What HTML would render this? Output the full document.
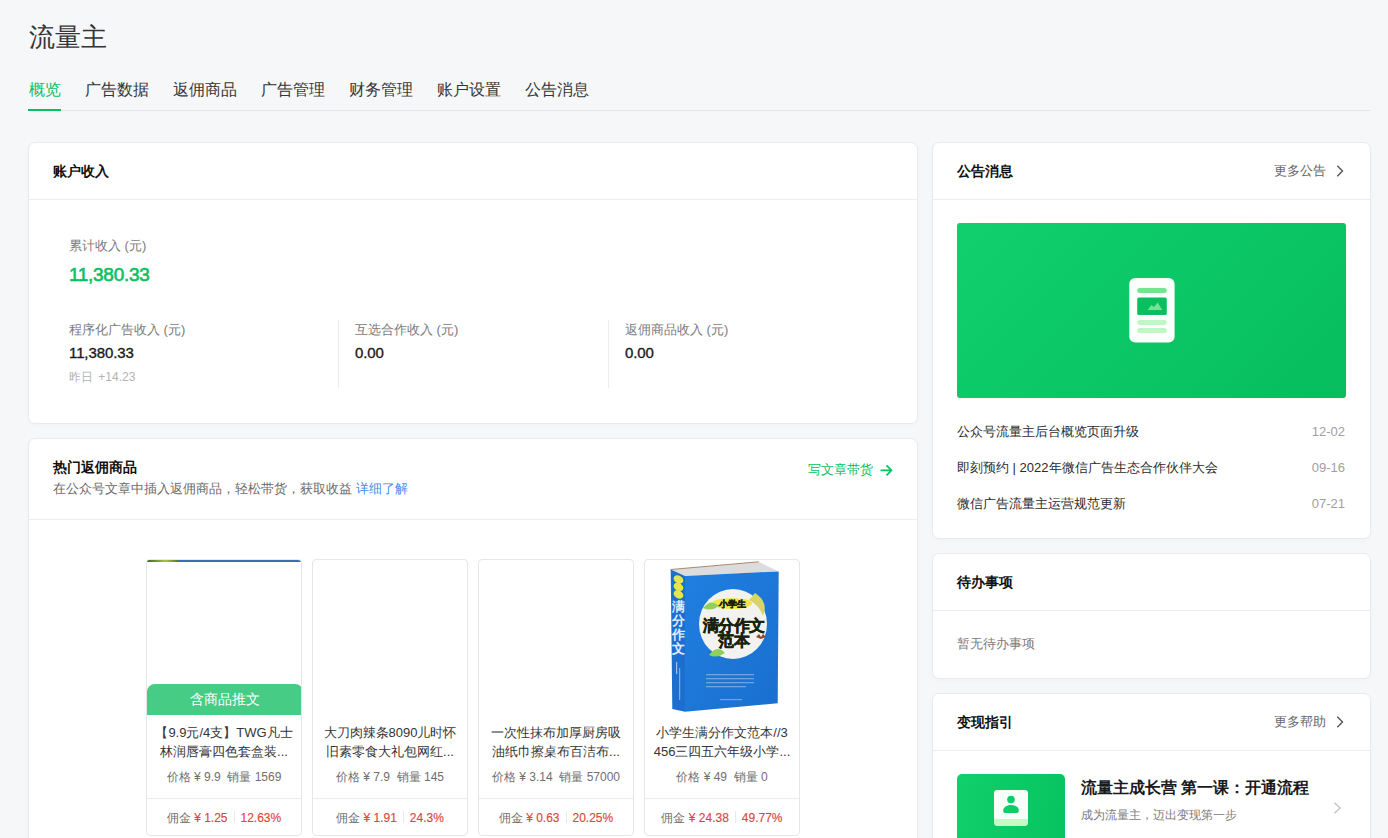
<!DOCTYPE html>
<html><head><meta charset="utf-8">
<style>
*{margin:0;padding:0;box-sizing:border-box}
html,body{width:1388px;height:838px;overflow:hidden;background:#f6f7f9;font-family:"Liberation Sans",sans-serif;color:#1a1a1a}
.abs{position:absolute}
.t{position:absolute;white-space:nowrap;line-height:1}
.card{position:absolute;background:#fff;border:1px solid #e9eaec;border-radius:7px;overflow:hidden;box-shadow:0 2px 4px rgba(0,0,0,0.02)}
.hd{position:absolute;left:0;right:0;top:0;height:57px;border-bottom:1px solid #ededed}
.h{font-size:14px;font-weight:bold;color:#111}
.tab{font-size:16px;color:#353535}
.lbl{font-size:13px;color:#7b7b7b}
.val{font-size:15px;color:#1a1a1a;-webkit-text-stroke:0.35px #1a1a1a;letter-spacing:-0.1px}
.pc{position:absolute;top:559px;width:156px;height:277px;border:1px solid #e6e6e6;border-radius:4px;background:#fff;overflow:hidden}
.pc .ti{position:absolute;left:0;right:0;top:163px;text-align:center;font-size:13px;line-height:19px;color:#353535}
.pc .pr{position:absolute;left:0;right:0;top:209px;text-align:center;font-size:12px;color:#6f6f6f;line-height:16px}
.pc .dv{position:absolute;left:0;right:0;top:238px;border-top:1px solid #ececec}
.pc .cm{position:absolute;left:0;right:0;top:250px;text-align:center;font-size:12px;color:#6f6f6f;line-height:16px}
.red{color:#dc4640;-webkit-text-stroke:0.15px #dc4640}
.sep{display:inline-block;width:1px;height:12px;background:#e6e9ee;margin:0 6px;vertical-align:-1px}
</style></head>
<body>
<div class="t" style="left:29px;top:24px;font-size:26px;color:#353535">流量主</div>

<div class="t tab" style="left:29px;top:82px;color:#07c160">概览</div>
<div class="t tab" style="left:85px;top:82px">广告数据</div>
<div class="t tab" style="left:173px;top:82px">返佣商品</div>
<div class="t tab" style="left:261px;top:82px">广告管理</div>
<div class="t tab" style="left:349px;top:82px">财务管理</div>
<div class="t tab" style="left:437px;top:82px">账户设置</div>
<div class="t tab" style="left:525px;top:82px">公告消息</div>
<div class="abs" style="left:28px;top:110px;width:1342px;height:1px;background:#e3e4e6"></div>
<div class="abs" style="left:28px;top:109px;width:33px;height:2px;background:#07c160"></div>

<!-- account income -->
<div class="card" style="left:28px;top:142px;width:890px;height:282px">
  <div class="hd"></div>
  <div class="t h" style="left:24px;top:21px">账户收入</div>
  <div class="t lbl" style="left:40px;top:96px">累计收入 (元)</div>
  <div class="t" style="left:40px;top:122px;font-size:19px;color:#07c160;letter-spacing:-0.3px;-webkit-text-stroke:0.6px #07c160">11,380.33</div>
  <div class="t lbl" style="left:40px;top:180px">程序化广告收入 (元)</div>
  <div class="t val" style="left:40px;top:202px">11,380.33</div>
  <div class="t" style="left:40px;top:228px;font-size:12px;color:#b2b2b2">昨日 <span style="margin-left:2px">+14.23</span></div>
  <div class="abs" style="left:309px;top:177px;width:1px;height:68px;background:#ececec"></div>
  <div class="t lbl" style="left:326px;top:180px">互选合作收入 (元)</div>
  <div class="t val" style="left:326px;top:202px">0.00</div>
  <div class="abs" style="left:579px;top:177px;width:1px;height:68px;background:#ececec"></div>
  <div class="t lbl" style="left:596px;top:180px">返佣商品收入 (元)</div>
  <div class="t val" style="left:596px;top:202px">0.00</div>
</div>

<!-- hot products -->
<div class="card" style="left:28px;top:438px;width:890px;height:420px">
  <div class="abs" style="left:0;right:0;top:0;height:81px;border-bottom:1px solid #ededed"></div>
  <div class="t h" style="left:24px;top:21px">热门返佣商品</div>
  <div class="t" style="left:24px;top:43px;font-size:13px;color:#6a6a6a">在公众号文章中插入返佣商品，轻松带货，获取收益 <span style="color:#3f8ef0">详细了解</span></div>
  <div class="t" style="left:779px;top:24px;font-size:13px;color:#07c160">写文章带货</div>
  <svg class="abs" style="left:850px;top:24px" width="16" height="14" viewBox="0 0 16 14"><path d="M1.5,7.3 H12.5 M7.5,2.3 L12.5,7.3 L7.5,12.3" fill="none" stroke="#07c160" stroke-width="1.7"/></svg>
</div>

<div class="pc" style="left:146px">
  <div class="abs" style="left:0;top:0;width:156px;height:2px;background:#3d6fb0"></div>
  <div class="abs" style="left:0;top:0;width:31px;height:2px;background:linear-gradient(90deg,#3f6a1c,#a9c43a 60%,#5a7a2a)"></div>
  <div class="abs" style="left:0;top:124px;width:156px;height:31px;background:#46cc85;border-radius:8px 8px 0 0;color:#fff;font-size:14px;font-weight:500;text-align:center;line-height:30px">含商品推文</div>
  <div class="ti">【9.9元/4支】TWG凡士<br>林润唇膏四色套盒装...</div>
  <div class="pr">价格 ¥ 9.9&nbsp; 销量 1569</div>
  <div class="dv"></div>
  <div class="cm">佣金 <span class="red">¥ 1.25</span><span class="sep"></span><span class="red">12.63%</span></div>
</div>
<div class="pc" style="left:312px">
  <div class="ti">大刀肉辣条8090儿时怀<br>旧素零食大礼包网红...</div>
  <div class="pr">价格 ¥ 7.9&nbsp; 销量 145</div>
  <div class="dv"></div>
  <div class="cm">佣金 <span class="red">¥ 1.91</span><span class="sep"></span><span class="red">24.3%</span></div>
</div>
<div class="pc" style="left:478px">
  <div class="ti">一次性抹布加厚厨房吸<br>油纸巾擦桌布百洁布...</div>
  <div class="pr">价格 ¥ 3.14&nbsp; 销量 57000</div>
  <div class="dv"></div>
  <div class="cm">佣金 <span class="red">¥ 0.63</span><span class="sep"></span><span class="red">20.25%</span></div>
</div>
<div class="pc" style="left:644px">
  <svg class="abs" style="left:20px;top:-2px" width="120" height="160" viewBox="0 0 120 160">
    <defs><linearGradient id="cv" x1="0" y1="0" x2="1" y2="1"><stop offset="0" stop-color="#1f7fe0"/><stop offset="1" stop-color="#1a6fcf"/></linearGradient></defs>
    <polygon points="5.7,11.5 93.6,3.8 113.7,13.4 20,18" fill="#dcdcdc"/>
    <polyline points="5.7,11.5 93.6,3.8" fill="none" stroke="#a0704a" stroke-width="0.8"/>
    <polygon points="5.7,11.5 20,18 20,153.8 7.3,151" fill="#1c6fcf"/>
    <polygon points="20,18 113.7,13.4 112.7,145.2 20,153.8" fill="url(#cv)"/>
    <ellipse cx="13.5" cy="21.5" rx="5.2" ry="3.8" transform="rotate(30 13.5 21.5)" fill="#e6e64a"/>
    <ellipse cx="13.5" cy="29" rx="5.2" ry="3.8" transform="rotate(30 13.5 29)" fill="#e6e64a"/>
    <ellipse cx="13.5" cy="36.5" rx="5.2" ry="3.8" transform="rotate(30 13.5 36.5)" fill="#e6e64a"/>
        <rect x="11" y="104" width="1.2" height="12" fill="#bcd6f4" opacity="0.8"/><rect x="14" y="110" width="1.2" height="32" fill="#bcd6f4" opacity="0.6"/>
    <ellipse cx="68" cy="66" rx="34" ry="35" fill="#f2f2ee"/>
    <path d="M90,35 Q104,44 98,58 Q94,47 84,42Z" fill="#d9d46a"/>
    <ellipse cx="67" cy="45.5" rx="20" ry="5.5" fill="#f0e84a"/>
    <path d="M38,50 Q46,40 54,48 Q46,54 38,50Z" fill="#8ed05a"/>
    <path d="M44,97 Q52,86 60,95 Q52,101 44,97Z" fill="#8ed05a"/>
    <g font-family="Liberation Serif,serif" font-weight="900" fill="#18220c" stroke="#18220c" stroke-width="0.5">
      <text x="67" y="49" font-size="8.5" text-anchor="middle">小学生</text>
      <text x="68.5" y="72.5" font-size="15.5" text-anchor="middle" letter-spacing="-0.5">满分作文</text>
      <text x="68.5" y="88" font-size="15.5" text-anchor="middle">范本</text>
    </g>
    <g font-family="Liberation Serif,serif" font-weight="900" fill="#f0f6ff" opacity="0.92">
      <text x="13.5" y="53" font-size="13" text-anchor="middle">满</text>
      <text x="13.5" y="67" font-size="13" text-anchor="middle">分</text>
      <text x="13.5" y="81" font-size="13" text-anchor="middle">作</text>
      <text x="13.5" y="95" font-size="13" text-anchor="middle">文</text>
    </g>
    <path d="M91,79 l3,-3 l2,3 l2,-3 l3,3 l-5,2z" fill="#8a4a30"/>
    <g fill="#ffffff" opacity="0.35">
      <rect x="41" y="116" width="48" height="1.3"/>
      <rect x="41" y="120" width="48" height="1.3"/>
      <rect x="41" y="124" width="48" height="1.3"/>
      <rect x="41" y="128" width="40" height="1.3"/>
      <rect x="55" y="141" width="22" height="1.2"/>
    </g>
  </svg>
  <div class="ti">小学生满分作文范本//3<br>456三四五六年级小学...</div>
  <div class="pr">价格 ¥ 49&nbsp; 销量 0</div>
  <div class="dv"></div>
  <div class="cm">佣金 <span class="red">¥ 24.38</span><span class="sep"></span><span class="red">49.77%</span></div>
</div>

<!-- announcements -->
<div class="card" style="left:932px;top:142px;width:439px;height:397px">
  <div class="hd"></div>
  <div class="t h" style="left:24px;top:21px">公告消息</div>
  <div class="t" style="left:341px;top:21px;font-size:13px;color:#666">更多公告</div>
  <svg class="abs" style="left:403px;top:21px" width="10" height="14" viewBox="0 0 10 14"><polyline points="1.3,1.8 6.5,7 1.3,12.2" fill="none" stroke="#555" stroke-width="1.4"/></svg>
  <div class="abs" style="left:24px;top:80px;width:389px;height:175px;border-radius:3px;background:linear-gradient(135deg,#10d06c,#07bd5e)"></div>
  <svg class="abs" style="left:187px;top:127px" width="65" height="80" viewBox="0 0 65 80">
    <rect x="9.25" y="8.1" width="45.35" height="64.4" rx="6" fill="#fbfffb"/>
    <rect x="17.2" y="17.9" width="29.6" height="5" rx="2.5" fill="#74e48f"/>
    <rect x="17.2" y="27.5" width="29.6" height="17.5" rx="1.5" fill="#0abf5d"/>
    <polygon points="27.7,40.1 31.5,35 33.9,37 37.7,32.4 42.2,40.1" fill="#6fe497"/>
    <rect x="17.2" y="50.1" width="29.6" height="4.8" rx="2.4" fill="#c1f6c6"/>
    <rect x="17.2" y="58" width="29.6" height="5" rx="2.5" fill="#c1f6c6"/>
  </svg>
  <div class="t" style="left:24px;top:282px;font-size:13px;color:#2b2b2b">公众号流量主后台概览页面升级</div>
  <div class="t" style="left:24px;top:318px;font-size:13px;color:#2b2b2b">即刻预约 | 2022年微信广告生态合作伙伴大会</div>
  <div class="t" style="left:24px;top:354px;font-size:13px;color:#2b2b2b">微信广告流量主运营规范更新</div>
  <div class="t" style="right:25px;top:282px;font-size:13px;color:#a0a0a0">12-02</div>
  <div class="t" style="right:25px;top:318px;font-size:13px;color:#a0a0a0">09-16</div>
  <div class="t" style="right:25px;top:354px;font-size:13px;color:#a0a0a0">07-21</div>
</div>

<div class="card" style="left:932px;top:553px;width:439px;height:126px">
  <div class="hd"></div>
  <div class="t h" style="left:24px;top:21px">待办事项</div>
  <div class="t" style="left:24px;top:83px;font-size:13px;color:#7b7b7b">暂无待办事项</div>
</div>

<div class="card" style="left:932px;top:693px;width:439px;height:200px">
  <div class="hd"></div>
  <div class="t h" style="left:24px;top:21px">变现指引</div>
  <div class="t" style="left:341px;top:21px;font-size:13px;color:#666">更多帮助</div>
  <svg class="abs" style="left:403px;top:21px" width="10" height="14" viewBox="0 0 10 14"><polyline points="1.3,1.8 6.5,7 1.3,12.2" fill="none" stroke="#555" stroke-width="1.4"/></svg>
  <svg class="abs" style="left:400px;top:107px" width="10" height="14" viewBox="0 0 10 14"><polyline points="1.5,1.8 7,7 1.5,12.2" fill="none" stroke="#c4c4c4" stroke-width="1.4"/></svg>
  <div class="abs" style="left:24px;top:80px;width:108px;height:80px;border-radius:5px;background:linear-gradient(100deg,#10d06c,#07c35f)"></div>
  <svg class="abs" style="left:61px;top:96px" width="34" height="36" viewBox="0 0 34 36">
    <rect x="0" y="0" width="34" height="36" rx="3.5" fill="#c3fbc4"/>
    <path d="M3.5,0 H30.5 A3.5,3.5 0 0 1 34,3.5 V29 H0 V3.5 A3.5,3.5 0 0 1 3.5,0Z" fill="#f8fff8"/>
    <circle cx="17" cy="9.5" r="3.8" fill="#0cce68"/>
    <path d="M9.2,20.5 C9.2,17.2 12.6,14.9 17,14.9 C21.4,14.9 24.8,17.2 24.8,20.5 V21 Q24.8,22.9 22.9,22.9 H11.1 Q9.2,22.9 9.2,21 Z" fill="#0cce68"/>
  </svg>
  <div class="t" style="left:148px;top:86px;font-size:16px;font-weight:bold;color:#1a1a1a">流量主成长营 第一课：开通流程</div>
  <div class="t" style="left:148px;top:115px;font-size:12px;color:#7b7b7b">成为流量主，迈出变现第一步</div>
</div>
</body></html>
